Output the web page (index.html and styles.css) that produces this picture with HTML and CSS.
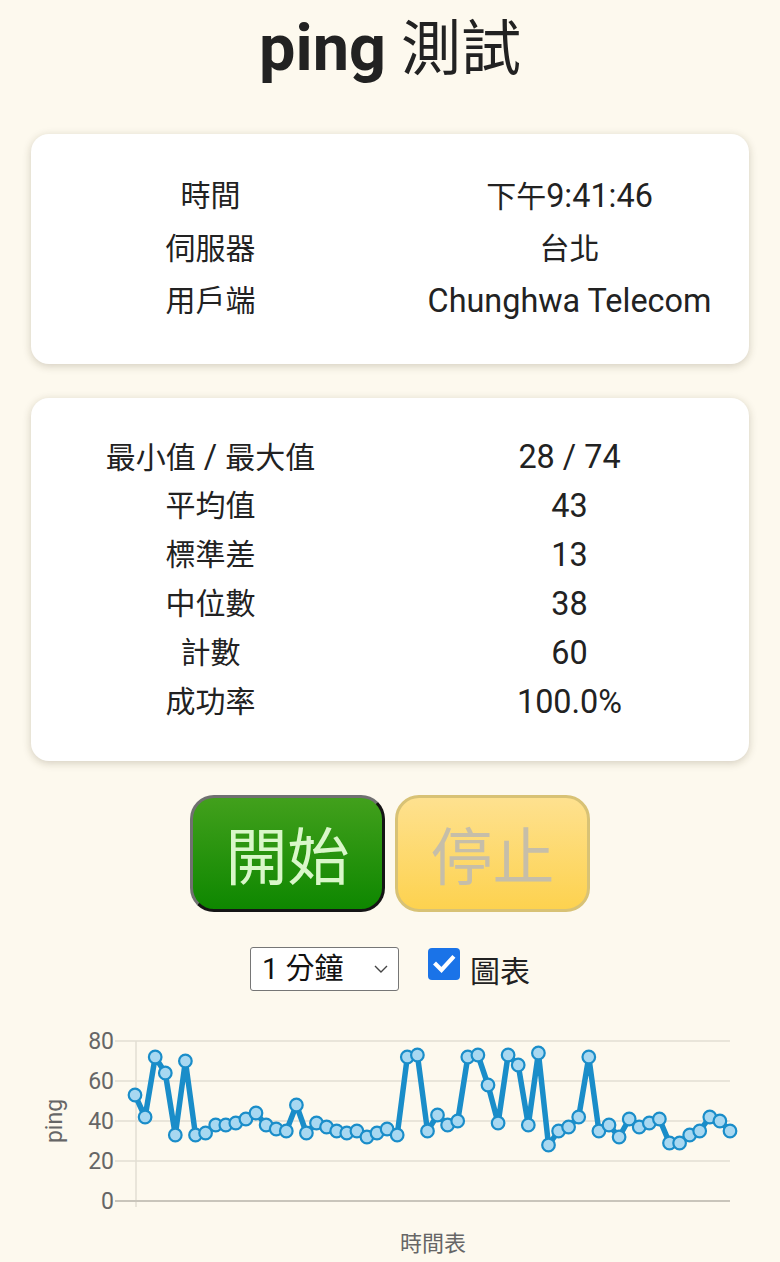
FILE: index.html
```html
<!DOCTYPE html>
<html lang="zh-Hant">
<head>
<meta charset="utf-8">
<title>ping 測試</title>
<link rel="stylesheet" href="styles.css">
</head>
<body>
<h1 class="title"><span class="lat">ping</span> <span class="title-cjk">測試</span></h1>

<section class="card card-info">
  <table class="kv">
    <tr><td>時間</td><td>下午<span class="lat">9:41:46</span></td></tr>
    <tr><td>伺服器</td><td>台北</td></tr>
    <tr><td>用戶端</td><td><span class="lat">Chunghwa Telecom</span></td></tr>
  </table>
</section>

<section class="card card-stats">
  <table class="kv">
    <tr><td>最小值<span class="lat"> / </span>最大值</td><td><span class="lat">28 / 74</span></td></tr>
    <tr><td>平均值</td><td><span class="lat">43</span></td></tr>
    <tr><td>標準差</td><td><span class="lat">13</span></td></tr>
    <tr><td>中位數</td><td><span class="lat">38</span></td></tr>
    <tr><td>計數</td><td><span class="lat">60</span></td></tr>
    <tr><td>成功率</td><td><span class="lat">100.0%</span></td></tr>
  </table>
</section>

<div class="buttons">
  <button class="btn btn-start">開始</button>
  <button class="btn btn-stop" disabled>停止</button>
</div>

<div class="controls">
  <span class="select-wrap">
    <select class="select"><option>1 分鐘</option></select>
    <svg class="chev" width="14" height="8" viewBox="0 0 14 8"><path d="M1 1 L7 7 L13 1" fill="none" stroke="#444" stroke-width="1.4"/></svg>
  </span>
  <label class="check">
    <span class="box"><svg width="32" height="32" viewBox="0 0 32 32"><path d="M8 16.5 L13.5 22 L24.5 10" fill="none" stroke="#fff" stroke-width="4.2" stroke-linecap="square"/></svg></span>
    <span class="check-text">圖表</span>
  </label>
</div>

<svg class="chart" width="780" height="252" viewBox="0 1010 780 252">
  <g class="grid">
    <line x1="115" y1="1040" x2="730" y2="1040"/>
    <line x1="115" y1="1080" x2="730" y2="1080"/>
    <line x1="115" y1="1120" x2="730" y2="1120"/>
    <line x1="115" y1="1160" x2="730" y2="1160"/>
    <line x1="136" y1="1040" x2="136" y2="1206"/>
  </g>
  <line class="axis0" x1="115" y1="1200" x2="730" y2="1200"/>
  <g class="ticks">
    <text x="114" y="1048">80</text>
    <text x="114" y="1088">60</text>
    <text x="114" y="1128">40</text>
    <text x="114" y="1168">20</text>
    <text x="114" y="1208">0</text>
  </g>
  <text class="axis-title" transform="translate(62 1120) rotate(-90)">ping</text>
  <text class="axis-title x-title" x="433" y="1250">時間表</text>
  <polyline class="series" points="135,1094 145.1,1116 155.2,1056 165.3,1072 175.3,1134 185.4,1060 195.5,1134 205.6,1132 215.7,1124 225.8,1124 235.8,1122 245.9,1118 256,1112 266.1,1124 276.2,1128 286.3,1130 296.4,1104 306.4,1132 316.5,1122 326.6,1126 336.7,1130 346.8,1132 356.9,1130 366.9,1136 377,1132 387.1,1128 397.2,1134 407.3,1056 417.4,1054 427.5,1130 437.5,1114 447.6,1124 457.7,1120 467.8,1056 477.9,1054 488,1084 498.1,1122 508.1,1054 518.2,1064 528.3,1124 538.4,1052 548.5,1144 558.6,1130 568.6,1126 578.7,1116 588.8,1056 598.9,1130 609,1124 619.1,1136 629.2,1118 639.2,1126 649.3,1122 659.4,1118 669.5,1142 679.6,1142 689.7,1134 699.7,1130 709.8,1116 719.9,1120 730,1130"/>
  <g class="pts">
    <circle cx="135" cy="1094" r="6.3"/><circle cx="145.1" cy="1116" r="6.3"/><circle cx="155.2" cy="1056" r="6.3"/><circle cx="165.3" cy="1072" r="6.3"/><circle cx="175.3" cy="1134" r="6.3"/><circle cx="185.4" cy="1060" r="6.3"/><circle cx="195.5" cy="1134" r="6.3"/><circle cx="205.6" cy="1132" r="6.3"/><circle cx="215.7" cy="1124" r="6.3"/><circle cx="225.8" cy="1124" r="6.3"/>
    <circle cx="235.8" cy="1122" r="6.3"/><circle cx="245.9" cy="1118" r="6.3"/><circle cx="256" cy="1112" r="6.3"/><circle cx="266.1" cy="1124" r="6.3"/><circle cx="276.2" cy="1128" r="6.3"/><circle cx="286.3" cy="1130" r="6.3"/><circle cx="296.4" cy="1104" r="6.3"/><circle cx="306.4" cy="1132" r="6.3"/><circle cx="316.5" cy="1122" r="6.3"/><circle cx="326.6" cy="1126" r="6.3"/>
    <circle cx="336.7" cy="1130" r="6.3"/><circle cx="346.8" cy="1132" r="6.3"/><circle cx="356.9" cy="1130" r="6.3"/><circle cx="366.9" cy="1136" r="6.3"/><circle cx="377" cy="1132" r="6.3"/><circle cx="387.1" cy="1128" r="6.3"/><circle cx="397.2" cy="1134" r="6.3"/><circle cx="407.3" cy="1056" r="6.3"/><circle cx="417.4" cy="1054" r="6.3"/><circle cx="427.5" cy="1130" r="6.3"/>
    <circle cx="437.5" cy="1114" r="6.3"/><circle cx="447.6" cy="1124" r="6.3"/><circle cx="457.7" cy="1120" r="6.3"/><circle cx="467.8" cy="1056" r="6.3"/><circle cx="477.9" cy="1054" r="6.3"/><circle cx="488" cy="1084" r="6.3"/><circle cx="498.1" cy="1122" r="6.3"/><circle cx="508.1" cy="1054" r="6.3"/><circle cx="518.2" cy="1064" r="6.3"/><circle cx="528.3" cy="1124" r="6.3"/>
    <circle cx="538.4" cy="1052" r="6.3"/><circle cx="548.5" cy="1144" r="6.3"/><circle cx="558.6" cy="1130" r="6.3"/><circle cx="568.6" cy="1126" r="6.3"/><circle cx="578.7" cy="1116" r="6.3"/><circle cx="588.8" cy="1056" r="6.3"/><circle cx="598.9" cy="1130" r="6.3"/><circle cx="609" cy="1124" r="6.3"/><circle cx="619.1" cy="1136" r="6.3"/><circle cx="629.2" cy="1118" r="6.3"/>
    <circle cx="639.2" cy="1126" r="6.3"/><circle cx="649.3" cy="1122" r="6.3"/><circle cx="659.4" cy="1118" r="6.3"/><circle cx="669.5" cy="1142" r="6.3"/><circle cx="679.6" cy="1142" r="6.3"/><circle cx="689.7" cy="1134" r="6.3"/><circle cx="699.7" cy="1130" r="6.3"/><circle cx="709.8" cy="1116" r="6.3"/><circle cx="719.9" cy="1120" r="6.3"/><circle cx="730" cy="1130" r="6.3"/>
  </g>
</svg>
</body>
</html>
```

FILE: styles.css
```css
html, body {
  margin: 0;
  padding: 0;
}
body {
  background: #fdf9ee;
  color: #222;
  font-family: Roboto, "Noto Sans CJK TC", sans-serif;
  width: 780px;
  overflow: hidden;
}
.lat {
  font-size: 1.08em;
}
.title {
  margin: 0;
  height: 96px;
  line-height: 96px;
  text-align: center;
  font-size: 60px;
  font-weight: 700;
  color: #222;
}
.title-cjk {
  font-weight: 400;
}
.card {
  background: #fff;
  margin: 0 31px;
  border-radius: 18px;
  box-shadow: 0 2px 8px rgba(60, 50, 20, 0.22);
}
.card-info {
  margin-top: 38px;
  padding: 36px 0;
}
.card-stats {
  margin-top: 34px;
  padding: 35px 0 34px;
}
.kv {
  width: 100%;
  border-collapse: collapse;
  table-layout: fixed;
  font-size: 30px;
  color: #222;
}
.kv td {
  text-align: center;
  padding: 0;
  width: 50%;
  line-height: 1;
}
.card-info .kv td {
  height: 52.5px;
}
.card-stats .kv td {
  height: 49px;
}
.buttons {
  display: flex;
  justify-content: center;
  gap: 10px;
  margin-top: 34px;
}
.btn {
  width: 195px;
  height: 117px;
  border-radius: 24px;
  font-family: "Noto Sans CJK TC", sans-serif;
  font-size: 62px;
  line-height: 1;
  padding: 0;
  box-sizing: border-box;
}
.btn-start {
  background: linear-gradient(#42a01c, #0e8700);
  color: #d9f7c9;
  border: 3px solid;
  border-color: #707070 #151515 #151515 #707070;
}
.btn-stop {
  background: linear-gradient(#fee18f, #fdd24f);
  color: #c6bea9;
  border: 3px solid #d8c275;
}
.controls {
  display: flex;
  justify-content: center;
  align-items: center;
  margin-top: 35px;
  height: 44px;
}
.select-wrap {
  position: relative;
  display: block;
}
.select {
  appearance: none;
  -webkit-appearance: none;
  display: block;
  width: 149px;
  height: 44px;
  box-sizing: border-box;
  border: 1px solid #767676;
  border-radius: 3px;
  background: #fff;
  color: #111;
  font-family: Roboto, "Noto Sans CJK TC", sans-serif;
  font-size: 29px;
  padding: 0 0 0 11px;
  margin: 0;
}
.chev {
  position: absolute;
  right: 11px;
  top: 18px;
}
.check {
  display: flex;
  align-items: center;
  margin-left: 29px;
}
.box {
  display: block;
  width: 32px;
  height: 32px;
  border-radius: 4px;
  background: #1a73e8;
  margin-top: -9px;
}
.box svg {
  display: block;
}
.check-text {
  margin-left: 10px;
  font-size: 30px;
  font-family: "Noto Sans CJK TC", sans-serif;
  color: #222;
}
.chart {
  display: block;
  margin-top: 20px;
}
.grid line {
  stroke: #e2ded3;
  stroke-width: 1.5;
}
.axis0 {
  stroke: #c9c5bb;
  stroke-width: 2;
}
.ticks text {
  font-family: Roboto, sans-serif;
  font-size: 23px;
  fill: #666;
  text-anchor: end;
}
.axis-title {
  font-family: Roboto, "Noto Sans CJK TC", sans-serif;
  font-size: 23px;
  fill: #666;
  text-anchor: middle;
}
.x-title {
  font-size: 22px;
}
.series {
  fill: none;
  stroke: #1a8dc9;
  stroke-width: 5.5;
  stroke-linejoin: round;
}
.pts circle {
  fill: #a8d8f1;
  stroke: #1a8dc9;
  stroke-width: 2.2;
}
```
